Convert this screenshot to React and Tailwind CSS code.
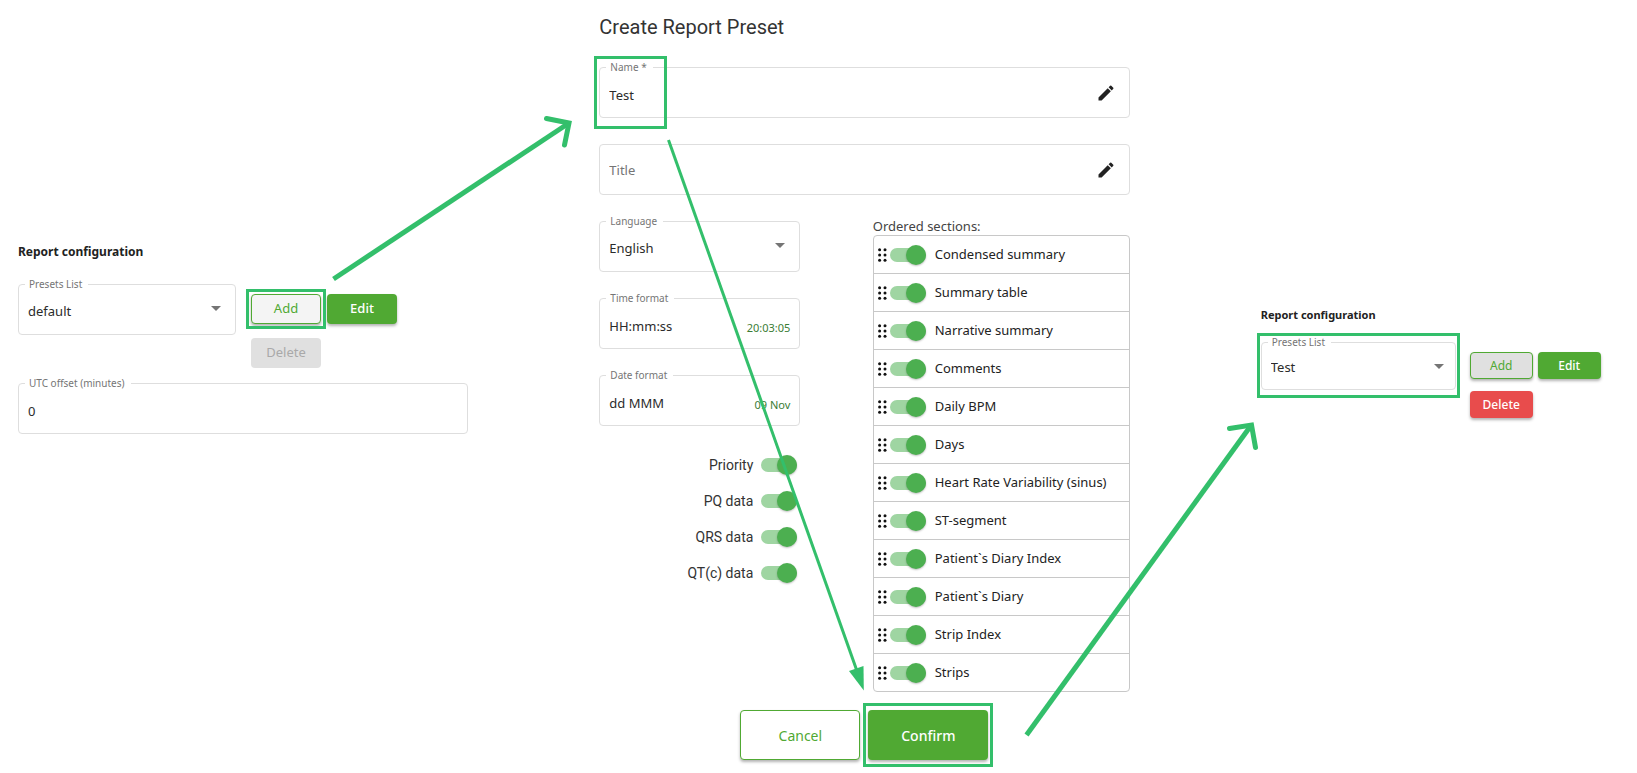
import React from "react";

const sections = [
  "Condensed summary",
  "Summary table",
  "Narrative summary",
  "Comments",
  "Daily BPM",
  "Days",
  "Heart Rate Variability (sinus)",
  "ST-segment",
  "Patient`s Diary Index",
  "Patient`s Diary",
  "Strip Index",
  "Strips",
];

const dataToggles = ["Priority", "PQ data", "QRS data", "QT(c) data"];

const labelClass =
  "absolute left-[7px] -top-2 bg-white pl-1 pr-[6px] text-[10px] leading-4 text-[#757575]";
const controlClass =
  "w-full appearance-none rounded border border-[#dedede] bg-white px-[9px] pt-1 text-[13px] text-[#2b2b2b] outline-none";

function Highlight({ className }) {
  return (
    <span
      aria-hidden="true"
      className={"pointer-events-none absolute z-10 border-3 border-[#33bf6b] " + className}
    />
  );
}

function SelectField({ id, label, value, height = "h-[51px]", arrow = "right-[15px]" }) {
  return (
    <div className="relative">
      <select id={id} defaultValue={value} className={controlClass + " block " + height}>
        <option>{value}</option>
      </select>
      <label htmlFor={id} className={labelClass}>
        {label}
      </label>
      <svg
        viewBox="0 0 10 5"
        className={"pointer-events-none absolute top-[22px] h-[5px] w-[10px] " + arrow}
      >
        <path d="M0 0h10L5 5z" fill="#757575" />
      </svg>
    </div>
  );
}

function TextField({ id, label, value, sample, children }) {
  return (
    <div className="relative">
      <input id={id} defaultValue={value} className={controlClass + " block h-[51px]"} />
      <label htmlFor={id} className={labelClass}>
        {label}
      </label>
      {sample && (
        <output
          htmlFor={id}
          className="absolute right-[10px] top-[22px] text-[11px] leading-4 text-[#3b7d35]"
        >
          {sample}
        </output>
      )}
      {children}
    </div>
  );
}

function EditButton({ label }) {
  return (
    <button
      type="button"
      aria-label={label}
      className="absolute right-[14px] top-4 size-5"
    >
      <svg viewBox="0 0 24 24" className="size-5" fill="#222">
        <path d="M3 17.25V21h3.75L17.81 9.94l-3.75-3.75L3 17.25zM20.71 7.04a1 1 0 0 0 0-1.41l-2.34-2.34a1 1 0 0 0-1.41 0l-1.83 1.83 3.75 3.75 1.83-1.83z" />
      </svg>
    </button>
  );
}

function Switch({ id }) {
  return (
    <span className="relative flex h-5 w-9 shrink-0 items-center">
      <input
        id={id}
        type="checkbox"
        role="switch"
        defaultChecked
        className="peer absolute inset-0 z-10 cursor-pointer opacity-0"
      />
      <span className="h-[14px] w-full rounded-full bg-[#bdbdbd] peer-checked:bg-[#9fd5a2]" />
      <span className="absolute left-0 size-5 rounded-full bg-white shadow-[0_1px_2px_rgba(0,0,0,0.25)] peer-checked:left-4 peer-checked:bg-[#4caf50]" />
    </span>
  );
}

function DragDots() {
  return (
    <svg viewBox="0 0 9 14" className="h-[14px] w-[9px] shrink-0" fill="#111">
      <circle cx="1.6" cy="1.8" r="1.5" />
      <circle cx="7" cy="1.8" r="1.5" />
      <circle cx="1.6" cy="7" r="1.5" />
      <circle cx="7" cy="7" r="1.5" />
      <circle cx="1.6" cy="12.2" r="1.5" />
      <circle cx="7" cy="12.2" r="1.5" />
    </svg>
  );
}

const raised = "shadow-[0_2px_3px_rgba(0,0,0,0.3)]";

function InitialConfiguration() {
  return (
    <section className="pt-[242px]">
      <h2 className="text-[12px] font-bold leading-5 text-[#222]">Report configuration</h2>
      <div className="mt-[22px] flex items-start gap-[15px]">
        <div className="w-[218px]">
          <SelectField id="presets-before" label="Presets List" value="default" />
        </div>
        <div className="grid grid-cols-[70px_70px] gap-x-[6px] gap-y-[14px] pt-[10px] text-[13px]">
          <div className="relative">
            <button
              type="button"
              className={"h-[30px] w-full rounded border border-[#50a933] bg-[#f4f4f4] text-[#50a933] " + raised}
            >
              Add
            </button>
            <Highlight className="-inset-x-[5px] -inset-y-[5px]" />
          </div>
          <button
            type="button"
            className={"h-[30px] rounded bg-[#50a933] font-medium text-white " + raised}
          >
            Edit
          </button>
          <button type="button" disabled className="h-[30px] rounded bg-[#e0e0e0] text-[#a9a9a9]">
            Delete
          </button>
        </div>
      </div>
      <div className="mt-[15px]">
        <TextField id="utc" label="UTC offset (minutes)" value="0" />
      </div>
    </section>
  );
}

function PresetForm() {
  return (
    <form className="pt-[13px]" onSubmit={(e) => e.preventDefault()}>
      <h1 className="font-[Roboto,sans-serif] text-[20px] leading-7 text-[#333]">
        Create Report Preset
      </h1>
      <div className="mt-[26px] flex flex-col gap-[26px]">
        <TextField id="name" label="Name *" value="Test">
          <EditButton label="Edit name" />
          <Highlight className="-left-[5px] -top-[11px] h-[73px] w-[73px]" />
        </TextField>
        <div className="relative">
          <input
            aria-label="Title"
            placeholder="Title"
            className="block h-[51px] w-full rounded border border-[#dedede] bg-white px-[9px] text-[13px] outline-none placeholder:text-[#757575]"
          />
          <EditButton label="Edit title" />
        </div>
      </div>

      <div className="mt-3 flex justify-between">
        <div className="w-[201px]">
          <div className="mt-[14px] flex flex-col gap-[26px]">
            <SelectField id="language" label="Language" value="English" />
            <TextField id="time" label="Time format" value="HH:mm:ss" sample="20:03:05" />
            <TextField id="date" label="Date format" value="dd MMM" sample="09 Nov" />
          </div>
          <div className="mt-[29px] flex flex-col items-end gap-4 pr-[3px] font-[Roboto,sans-serif] text-[14px] text-[#333]">
            {dataToggles.map((name, i) => (
              <label key={name} htmlFor={"data-" + i} className="flex h-5 items-center gap-2">
                {name}
                <Switch id={"data-" + i} />
              </label>
            ))}
          </div>
        </div>
        <div className="w-[257px]">
          <p className="mt-[10px] text-[13px] leading-[18px] text-[#444]">Ordered sections:</p>
          <ul className="divide-y divide-[#c8c8c8] rounded border border-[#c8c8c8] text-[13px] text-[#222]">
            {sections.map((name, i) => (
              <li key={name} className="box-content flex h-[37px] items-center pl-1">
                <DragDots />
                <span className="ml-[3px] flex">
                  <Switch id={"section-" + i} />
                </span>
                <label htmlFor={"section-" + i} className="ml-[9px]">
                  {name}
                </label>
              </li>
            ))}
          </ul>
        </div>
      </div>

      <div className="mt-[18px] flex gap-2 pl-[141px] text-[14px]">
        <button
          type="button"
          className={"h-[50px] w-[120px] rounded border border-[#50a933] bg-white text-[#50a933] " + raised}
        >
          Cancel
        </button>
        <div className="relative w-[120px]">
          <button
            type="submit"
            className={"h-[50px] w-full rounded bg-[#50a933] font-medium text-white " + raised}
          >
            Confirm
          </button>
          <Highlight className="-inset-x-[5px] -inset-y-[7px]" />
        </div>
      </div>
    </form>
  );
}

function UpdatedConfiguration() {
  return (
    <section className="pt-[305px]">
      <h2 className="text-[11px] font-bold leading-5 text-[#222]">Report configuration</h2>
      <div className="mt-[17px] flex items-start gap-[14px]">
        <div className="relative w-[195px]">
          <SelectField id="presets-after" label="Presets List" value="Test" height="h-12" arrow="right-[12px]" />
          <Highlight className="-left-1 -right-1 -bottom-2 -top-[9px]" />
        </div>
        <div className="grid grid-cols-[63px_63px] gap-x-[5px] gap-y-3 pt-[10px] text-[12px]">
          <button
            type="button"
            className={"h-[27px] rounded border border-[#50a933] bg-[#e0e0e0] text-[#50a933] " + raised}
          >
            Add
          </button>
          <button
            type="button"
            className={"h-[27px] rounded bg-[#50a933] font-medium text-white " + raised}
          >
            Edit
          </button>
          <button
            type="button"
            className={"h-[27px] rounded bg-[#e84c4c] font-medium text-white " + raised}
          >
            Delete
          </button>
        </div>
      </div>
    </section>
  );
}

function StepArrows() {
  return (
    <svg
      aria-hidden="true"
      viewBox="0 0 1637 773"
      preserveAspectRatio="none"
      className="pointer-events-none absolute inset-0 z-20 size-full"
      fill="none"
      stroke="#33bf6b"
      strokeWidth="5"
    >
      <path d="M333.500 279 569 123" />
      <path d="M546.500 118.500 569 123 564.500 145" strokeLinecap="round" />
      <path d="M668.500 140 857 671" strokeWidth="3" />
      <path d="M849 671 863.500 666 863.800 690.500z" fill="#33bf6b" stroke="none" />
      <path d="M1026.500 735 1251 425.500" />
      <path d="M1229.500 428.500 1251.500 425 1255.500 447.500" strokeLinecap="round" />
    </svg>
  );
}

export default function App() {
  return (
    <main className="relative grid min-h-screen grid-cols-[450fr_530fr_340fr] gap-x-[131px] bg-white pb-2 pl-[18px] pr-9 font-['Noto_Sans',sans-serif]">
      <InitialConfiguration />
      <PresetForm />
      <UpdatedConfiguration />
      <StepArrows />
    </main>
  );
}
